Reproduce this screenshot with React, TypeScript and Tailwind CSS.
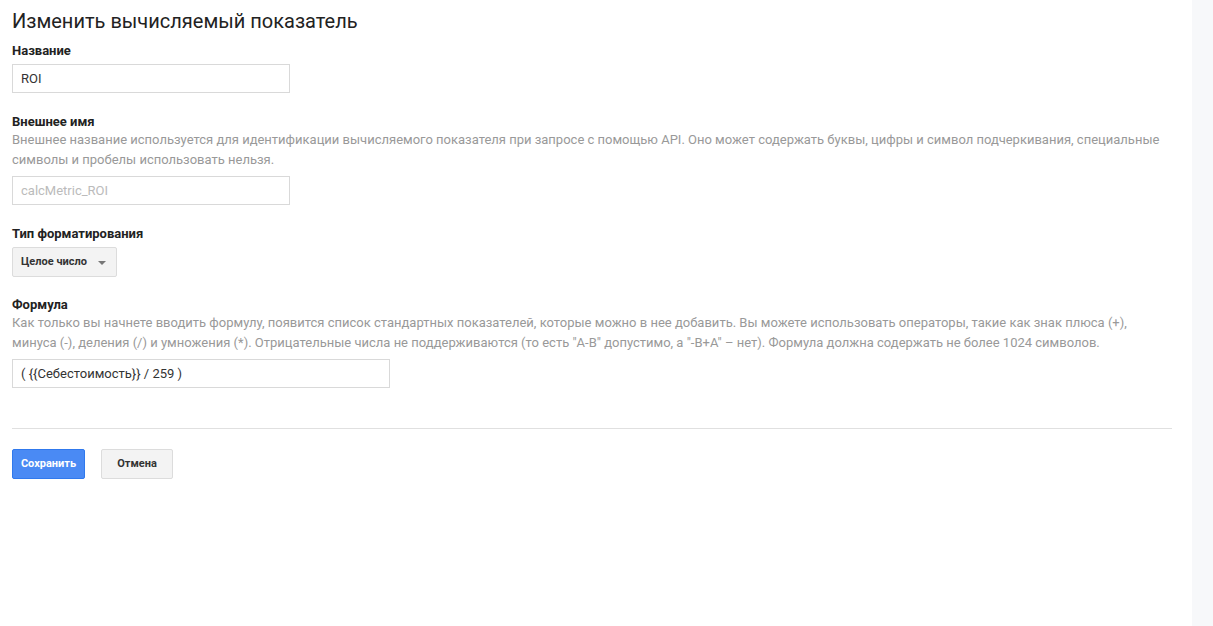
const label = "text-[13px] font-bold text-[#222] leading-[16px]";
const hint = "text-[13px] text-[#999] leading-[20px]";
const input =
  "h-[29px] border border-[#d9d9d9] bg-white px-[8px] text-[13px] leading-[27px] text-[#333]";

export default function App() {
  return (
    <div className="flex min-h-[626px] w-full bg-white font-['Roboto',sans-serif]">
      <div className="flex-1 pl-[12px] pr-[20px]">
        <h1 className="mt-[8px] text-[20px] leading-[26px] font-normal text-[#222]">
          Изменить вычисляемый показатель
        </h1>

        <div className="mt-[9px]">
          <div className={label}>Название</div>
          <div className={`${input} mt-[5px] w-[278px]`}>ROI</div>
        </div>

        <div className="mt-[21px]">
          <div className={label}>Внешнее имя</div>
          <p className={hint}>
            Внешнее название используется для идентификации вычисляемого показателя при запросе с
            помощью API. Оно может содержать буквы, цифры и символ подчеркивания, специальные
            символы и пробелы использовать нельзя.
          </p>
          <div className={`${input} mt-[6px] w-[278px] text-[#bbb]`}>calcMetric_ROI</div>
        </div>

        <div className="mt-[21px]">
          <div className={label}>Тип форматирования</div>
          <button className="mt-[5px] flex h-[30px] w-[105px] items-center rounded-[2px] border border-[#dcdcdc] bg-[#f3f3f3] pl-[8px] text-[11px] font-bold text-[#333]">
            Целое число
            <span className="ml-[11px] mt-[2px] h-0 w-0 border-x-[4px] border-t-[4px] border-x-transparent border-t-[#777]" />
          </button>
        </div>

        <div className="mt-[20px]">
          <div className={label}>Формула</div>
          <p className={`${hint} leading-[19.5px]`}>
            Как только вы начнете вводить формулу, появится список стандартных показателей, которые
            можно в нее добавить. Вы можете использовать операторы, такие как знак плюса (+),
            минуса (-), деления (/) и умножения (*). Отрицательные числа не поддерживаются (то есть
            "A-B" допустимо, а "-B+A" – нет). Формула должна содержать не более 1024 символов.
          </p>
          <div className={`${input} mt-[6px] w-[378px]`}>( {"{{Себестоимость}}"} / 259 )</div>
        </div>

        <div className="mt-[40px] border-t border-[#e0e0e0]" />

        <div className="mt-[20px] flex gap-[16px]">
          <button className="h-[30px] w-[73px] rounded-[2px] border border-[#3079ed] bg-[#4a8af4] text-[11px] font-bold text-white">
            Сохранить
          </button>
          <button className="h-[30px] w-[72px] rounded-[2px] border border-[#dcdcdc] bg-[#f3f3f3] text-[11px] font-bold text-[#333]">
            Отмена
          </button>
        </div>
      </div>
      <div className="w-[21px] shrink-0 bg-[#f7f8fa]" />
    </div>
  );
}
